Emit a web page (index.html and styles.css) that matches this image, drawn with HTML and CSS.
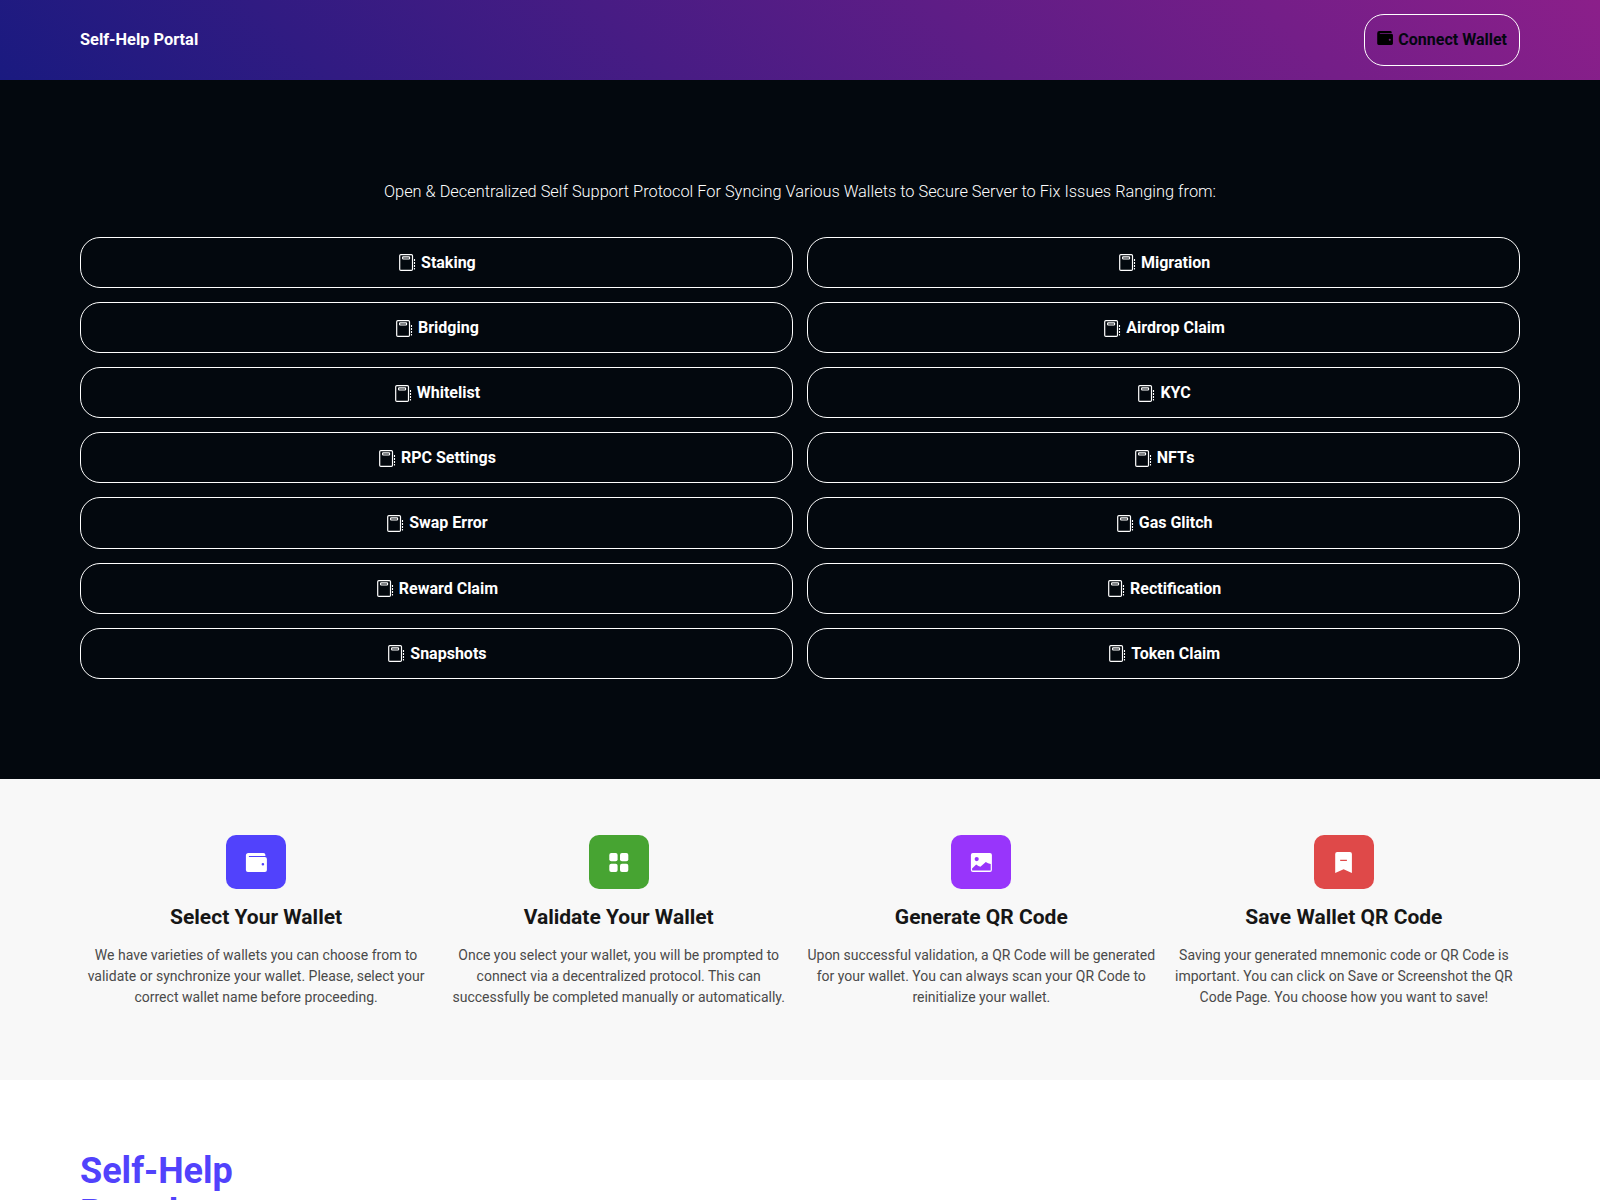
FILE: index.html
```html
<!DOCTYPE html>
<html lang="en">
<head>
<meta charset="utf-8">
<title>Self-Help Portal</title>
<link rel="stylesheet" href="styles.css">
</head>
<body>
<svg class="sprite" aria-hidden="true">
  <symbol id="kiosk" viewBox="0 0 20 20">
    <rect x="2.700" y="2.600" width="12.800" height="15.800" rx="1.200" fill="none" stroke="currentColor" stroke-width="1.200"/>
    <rect x="5.600" y="4.800" width="7" height="2.200" rx=".7" fill="none" stroke="currentColor" stroke-width="1.200"/>
    <path d="M17.500 7v10.500" fill="none" stroke="currentColor" stroke-width="1.100" stroke-dasharray="2 1"/>
  </symbol>
  <symbol id="wallet" viewBox="0 0 24 24">
    <path fill="currentColor" fill-rule="evenodd" d="M3.300 1.500h15.500a2 2 0 0 1 2 2v1H4.300a.5.500 0 0 0 0 1h16.700a1.500 1.500 0 0 1 1.500 1.500V19a2 2 0 0 1-2 2H2.300a2 2 0 0 1-2-2V4.500A3 3 0 0 1 3.300 1.500zm14.700 10.700a1.400 1.400 0 1 0 0 2.800 1.400 1.400 0 0 0 0-2.800z"/>
  </symbol>
</svg>

<header class="header">
  <a class="brand">Self-Help Portal</a>
  <a class="connect"><svg class="connect-icon"><use href="#wallet"/></svg><span>Connect Wallet</span></a>
</header>

<section class="hero">
  <p class="lead">Open &amp; Decentralized Self Support Protocol For Syncing Various Wallets to Secure Server to Fix Issues Ranging from:</p>
  <div class="issues">
    <a class="issue"><svg class="issue-icon"><use href="#kiosk"/></svg>Staking</a>
    <a class="issue"><svg class="issue-icon"><use href="#kiosk"/></svg>Migration</a>
    <a class="issue"><svg class="issue-icon"><use href="#kiosk"/></svg>Bridging</a>
    <a class="issue"><svg class="issue-icon"><use href="#kiosk"/></svg>Airdrop Claim</a>
    <a class="issue"><svg class="issue-icon"><use href="#kiosk"/></svg>Whitelist</a>
    <a class="issue"><svg class="issue-icon"><use href="#kiosk"/></svg>KYC</a>
    <a class="issue"><svg class="issue-icon"><use href="#kiosk"/></svg>RPC Settings</a>
    <a class="issue"><svg class="issue-icon"><use href="#kiosk"/></svg>NFTs</a>
    <a class="issue"><svg class="issue-icon"><use href="#kiosk"/></svg>Swap Error</a>
    <a class="issue"><svg class="issue-icon"><use href="#kiosk"/></svg>Gas Glitch</a>
    <a class="issue"><svg class="issue-icon"><use href="#kiosk"/></svg>Reward Claim</a>
    <a class="issue"><svg class="issue-icon"><use href="#kiosk"/></svg>Rectification</a>
    <a class="issue"><svg class="issue-icon"><use href="#kiosk"/></svg>Snapshots</a>
    <a class="issue"><svg class="issue-icon"><use href="#kiosk"/></svg>Token Claim</a>
  </div>
</section>

<section class="steps">
  <article class="step">
    <div class="tile tile-blue"><svg class="tile-icon" viewBox="-0.400 0 24 24"><path fill="currentColor" fill-rule="evenodd" d="M4 3h15q2 0 2 2v1H4.500v1H20.500q2 0 2 2v11q0 2-2 2h-17q-2 0-2-2V5.500Q1.500 3 4 3zm14.500 10a1.300 1.300 0 1 0 0 2.600 1.300 1.300 0 0 0 0-2.600z"/></svg></div>
    <h2 class="step-title">Select Your Wallet</h2>
    <p class="step-text">We have varieties of wallets you can choose from to validate or synchronize your wallet. Please, select your correct wallet name before proceeding.</p>
  </article>
  <article class="step">
    <div class="tile tile-green"><svg class="tile-icon" viewBox="0 0 24 24"><g fill="currentColor"><rect x="2.300" y="3" width="8.300" height="8.300" rx="2"/><rect x="13" y="3" width="8.300" height="8.300" rx="2"/><rect x="2.300" y="13.700" width="8.300" height="8.300" rx="2"/><rect x="13" y="13.700" width="8.300" height="8.300" rx="2"/></g></svg></div>
    <h2 class="step-title">Validate Your Wallet</h2>
    <p class="step-text">Once you select your wallet, you will be prompted to connect via a decentralized protocol. This can successfully be completed manually or automatically.</p>
  </article>
  <article class="step">
    <div class="tile tile-violet"><svg class="tile-icon" viewBox="-0.400 0 24 24"><path fill="currentColor" fill-rule="evenodd" d="M3.500 3h17q2 0 2 2v15q0 2-2 2h-17q-2 0-2-2V5q0-2 2-2zM7.300 7a2.100 2.100 0 1 0 0 4.200A2.100 2.100 0 0 0 7.300 7zM2.700 18.500V20q0 .6.600.6h17.400q.6 0 .6-.6v-6l-2.700-.8-2.200-1.200-5.400 4.800-2-.8-2.200-1.500z"/></svg></div>
    <h2 class="step-title">Generate QR Code</h2>
    <p class="step-text">Upon successful validation, a QR Code will be generated for your wallet. You can always scan your QR Code to reinitialize your wallet.</p>
  </article>
  <article class="step">
    <div class="tile tile-red"><svg class="tile-icon" viewBox="-0.200 0 24 24"><path fill="currentColor" fill-rule="evenodd" d="M5 2h12.700q2 0 2 2v19l-8.300-3.800L3 23V4q0-2 2-2zM8 9.700v1.200h6.700V9.700z"/></svg></div>
    <h2 class="step-title">Save Wallet QR Code</h2>
    <p class="step-text">Saving your generated mnemonic code or QR Code is important. You can click on Save or Screenshot the QR Code Page. You choose how you want to save!</p>
  </article>
</section>

<section class="about">
  <h1 class="about-title">Self-Help<br>Portal</h1>
</section>
</body>
</html>
```
FILE: styles.css
```css
* { box-sizing: border-box; margin: 0; padding: 0; }
html, body { height: 100%; overflow: hidden; }
body { background: #fff; font-family: Roboto, sans-serif; font-size: 16px; display: flex; flex-direction: column; }
.sprite { display: none; }

.header {
  height: 79.55px; flex: none; padding: 0 80px;
  display: flex; align-items: center; justify-content: space-between;
  background: linear-gradient(45deg, #1a1a80, #8b1f8a);
}
.brand { color: #fff; font-size: 16.36px; font-weight: 700; line-height: 19px; }
.connect {
  display: flex; align-items: flex-start; gap: 4px;
  height: 52px; padding: 15px 12px; border: 1px solid #fff; border-radius: 20px;
  color: #03070f; font-weight: 700; line-height: 19px;
}
.connect-icon { width: 17px; height: 17px; color: #000; }

.hero { flex: none; height: 699.4px; padding: 102px 80px 0; background: #03080e; }
.lead { color: #fff; font-size: 16.36px; font-weight: 300; text-align: center; line-height: 19px; margin-bottom: 36.3px; }
.issues { display: grid; grid-template-columns: 1fr 1fr; gap: 14.05px 14.4px; }
.issue {
  display: flex; align-items: center; justify-content: center; gap: 4px;
  height: 51.1px; border: 1px solid #fff; border-radius: 20px;
  color: #fff; font-weight: 700;
}
.issue-icon { width: 20px; height: 20px; }

.steps {
  flex: none; height: 301px; padding: 56px 80px 0; background: #f8f8f8;
  display: grid; grid-template-columns: repeat(4, 1fr); gap: 10.4px;
}
.step { display: flex; flex-direction: column; align-items: center; text-align: center; }
.tile {
  width: 60px; height: 54px; border-radius: 10px; color: #fff;
  display: flex; align-items: center; justify-content: center;
}
.tile-icon { width: 24px; height: 24px; }
.tile-blue { background: #5142fc; }
.tile-green { background: #47a432; }
.tile-violet { background: #9835fb; }
.tile-red { background: #df4949; }
.step-title { margin-top: 15px; font-size: 21px; line-height: 26px; font-weight: 700; color: #161616; }
.step-text { margin-top: 15px; font-size: 14px; line-height: 21px; color: #4a4a4a; }

.about { flex: none; padding: 70px 80px 0; }
.about-title { font-size: 36px; line-height: 42px; font-weight: 700; color: #5142fc; }
```
